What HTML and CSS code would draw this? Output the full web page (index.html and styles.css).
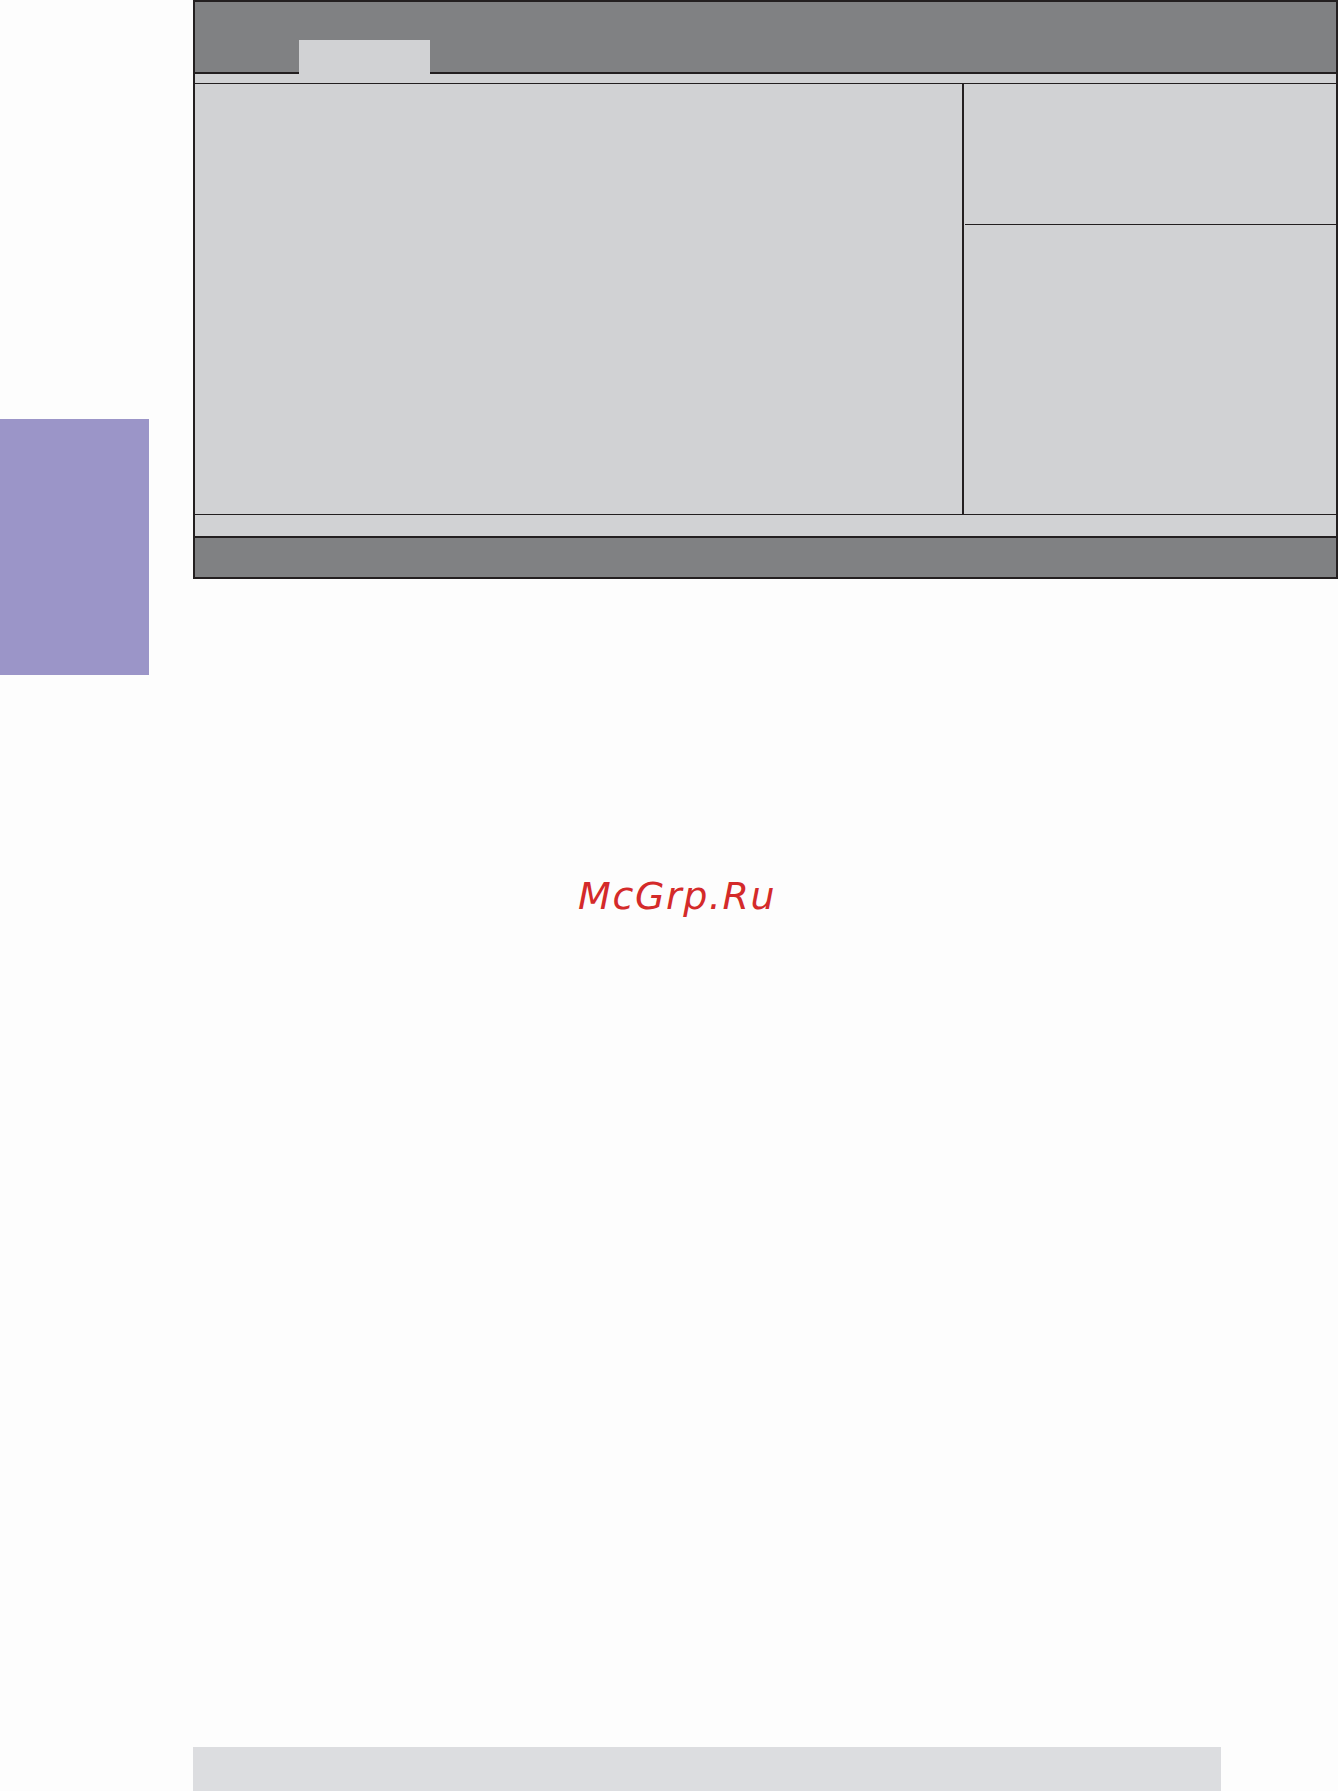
FILE: index.html
```html
<!DOCTYPE html>
<html lang="ru">
<head>
<meta charset="utf-8">
<title>BIOS</title>
<link rel="stylesheet" href="styles.css">
</head>
<body>
<div class="page">
  <div class="top">
    <aside class="side"><div class="edge-tab"></div></aside>
    <div class="bios">
      <div class="bios-head"><div class="bios-tab"></div></div>
      <div class="bios-strip"></div>
      <div class="bios-main">
        <div class="bios-left"></div>
        <div class="bios-right">
          <div class="bios-help"></div>
          <div class="bios-keys"></div>
        </div>
      </div>
      <div class="bios-strip2"></div>
      <div class="bios-foot"></div>
    </div>
  </div>
  <div class="mark">McGrp.Ru</div>
  <div class="bottom-bar"></div>
</div>
</body>
</html>
```
FILE: styles.css
```css
html, body {
  margin: 0;
  padding: 0;
  background: #fdfdfd;
}
.page {
  width: 1338px;
  height: 1791px;
  display: flex;
  flex-direction: column;
  overflow: hidden;
}
.top {
  display: flex;
  align-items: flex-start;
}
.side {
  width: 193px;
  flex: none;
}
.edge-tab {
  width: 149px;
  height: 256px;
  margin-top: 419px;
  background: #9b95c8;
}
.bios {
  width: 1141px;
  border: 2px solid #231f20;
  background: #d1d2d4;
  display: flex;
  flex-direction: column;
}
.bios-head {
  height: 70px;
  background: #808183;
  border-bottom: 2px solid #231f20;
  display: flex;
  align-items: flex-end;
  padding-left: 104px;
}
.bios-tab {
  width: 131px;
  height: 34px;
  margin-bottom: -2px;
  background: #d1d2d4;
}
.bios-strip {
  height: 9px;
  border-bottom: 1px solid #231f20;
}
.bios-main {
  height: 430px;
  display: flex;
  border-bottom: 1px solid #231f20;
}
.bios-left {
  width: 767px;
  border-right: 2px solid #231f20;
}
.bios-right {
  flex: 1;
  display: flex;
  flex-direction: column;
  padding-left: 1px;
}
.bios-help {
  height: 140px;
  border-bottom: 1px solid #231f20;
}
.bios-keys {
  flex: 1;
}
.bios-strip2 {
  height: 21px;
  border-bottom: 2px solid #231f20;
}
.bios-foot {
  height: 39px;
  background: #808183;
}
.mark {
  margin-top: 198px;
  padding-left: 578px;
  height: 46px;
  line-height: 46px;
  font-family: "DejaVu Sans", sans-serif;
  font-style: italic;
  font-size: 38px;
  letter-spacing: 1.6px;
  color: #d42a2a;
}
.bottom-bar {
  margin-top: auto;
  margin-left: 193px;
  width: 1028px;
  height: 44px;
  background: #dcdde0;
}
```
